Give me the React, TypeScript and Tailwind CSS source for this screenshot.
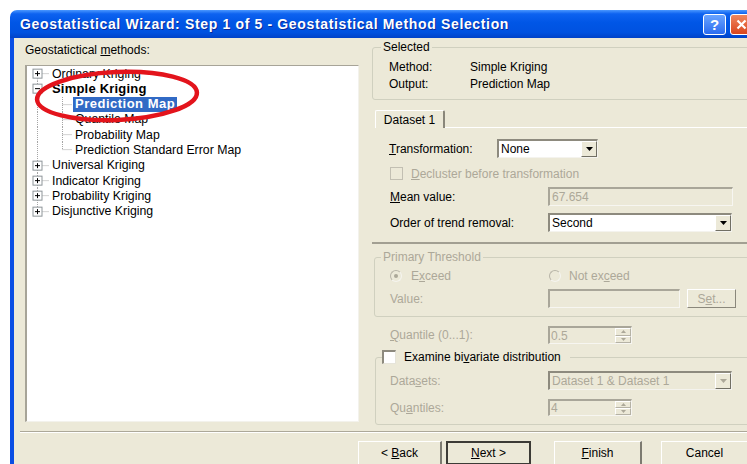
import React from "react";

type TreeRow = {
  level: 0 | 1;
  label: string;
  box?: "+" | "-";
  bold?: boolean;
  selected?: boolean;
  first?: boolean;
  last?: boolean;
  lastChild?: boolean;
};

const rows: TreeRow[] = [
  { level: 0, label: "Ordinary Kriging", box: "+", first: true },
  { level: 0, label: "Simple Kriging", box: "-", bold: true },
  { level: 1, label: "Prediction Map", selected: true },
  { level: 1, label: "Quantile Map" },
  { level: 1, label: "Probability Map" },
  { level: 1, label: "Prediction Standard Error Map", lastChild: true },
  { level: 0, label: "Universal Kriging", box: "+" },
  { level: 0, label: "Indicator Kriging", box: "+" },
  { level: 0, label: "Probability Kriging", box: "+" },
  { level: 0, label: "Disjunctive Kriging", box: "+", last: true },
];

const DOT = "#A5A5A5";

function RootCell({ row }: { row: TreeRow }) {
  const h = 15.3;
  const m = h / 2;
  const top = row.level === 0 && row.first ? m : 0;
  const bottom = row.level === 0 && row.last ? m : h;
  return (
    <svg width="22" height={h} className="shrink-0">
      <line x1="10.5" y1={top} x2="10.5" y2={bottom} stroke={DOT} strokeDasharray="1 1" />
      {row.level === 0 && (
        <line x1="10.5" y1={m} x2="22" y2={m} stroke={DOT} strokeDasharray="1 1" />
      )}
      {row.box && (
        <g>
          <rect x="6" y={m - 4.5} width="9" height="9" fill="#fff" stroke="#8E9599" />
          <line x1="8" y1={m} x2="13" y2={m} stroke="#000" />
          {row.box === "+" && <line x1="10.5" y1={m - 2.5} x2="10.5" y2={m + 2.5} stroke="#000" />}
        </g>
      )}
    </svg>
  );
}

function ChildCell({ row }: { row: TreeRow }) {
  const h = 15.3;
  const m = h / 2;
  return (
    <svg width="23" height={h} className="shrink-0">
      <line x1="13.5" y1="0" x2="13.5" y2={row.lastChild ? m : h} stroke={DOT} strokeDasharray="1 1" />
      <line x1="13.5" y1={m} x2="23" y2={m} stroke={DOT} strokeDasharray="1 1" />
    </svg>
  );
}

function Tree() {
  return (
    <div className="relative w-[334px] h-[357px] bg-white border-t border-l-2 border-r border-b border-t-[#A7A498] border-l-[#A7A498] border-r-[#F3F2EC] border-b-[#F3F2EC]">
      <div className="flex flex-col">
        {rows.map((row) => (
          <div key={row.label} className="flex items-center h-[15.3px] whitespace-nowrap">
            <RootCell row={row} />
            {row.level === 1 && <ChildCell row={row} />}
            {row.selected ? (
              <span className="ml-[1px] px-[2px] h-[15px] flex items-center bg-[#316AC5] text-white font-bold text-[13px] tracking-[0.5px]">
                {row.label}
              </span>
            ) : (
              <span
                className={
                  row.bold
                    ? "pl-[3px] font-bold text-[13px] tracking-[0.2px] leading-none"
                    : "pl-[3px] text-[12.3px] leading-none"
                }
              >
                {row.label}
              </span>
            )}
          </div>
        ))}
      </div>
      {/* red marker ring around the chosen method */}
      <svg className="absolute left-0 top-0 pointer-events-none" width="220" height="72">
        <ellipse
          cx="90"
          cy="30"
          rx="80"
          ry="24"
          fill="none"
          stroke="#E3141C"
          strokeWidth="4.5"
          transform="rotate(-2.5 90 30)"
        />
      </svg>
    </div>
  );
}

function DownArrow({ color = "#000" }: { color?: string }) {
  return (
    <svg width="7" height="4" viewBox="0 0 7 4">
      <path d="M0 0h7L3.5 4z" fill={color} />
    </svg>
  );
}

function UpArrow({ color = "#ACA899" }: { color?: string }) {
  return (
    <svg width="5" height="3" viewBox="0 0 5 3">
      <path d="M0 3h5L2.5 0z" fill={color} />
    </svg>
  );
}

function SmallDown({ color = "#ACA899" }: { color?: string }) {
  return (
    <svg width="5" height="3" viewBox="0 0 5 3">
      <path d="M0 0h5L2.5 3z" fill={color} />
    </svg>
  );
}

function Combo({
  value,
  disabled,
  width,
}: {
  value: string;
  disabled?: boolean;
  width: string;
}) {
  return (
    <div
      className={
        "flex h-[19px] border-t-2 border-l-2 border-r border-b border-t-[#8D8A7E] border-l-[#8D8A7E] border-r-[#F4F3EE] border-b-[#F4F3EE] " +
        (disabled ? "bg-[#ECE9D8] text-[#ACA899] " : "bg-white text-black ") +
        width
      }
    >
      <div className="flex-1 flex items-center pl-[2px] leading-none whitespace-nowrap">{value}</div>
      <div className="w-[16px] h-full flex items-center justify-center bg-[#ECE9D8] border border-t-white border-l-white border-r-[#716F64] border-b-[#716F64]">
        <DownArrow color={disabled ? "#ACA899" : "#000"} />
      </div>
    </div>
  );
}

function TextBox({ value, width }: { value: string; width: string }) {
  return (
    <div
      className={
        "flex items-center h-[19px] pl-[2px] bg-[#ECE9D8] text-[#ACA899] border-t-2 border-l-2 border-r border-b border-t-[#A9A699] border-l-[#A9A699] border-r-[#F7F6F1] border-b-[#F7F6F1] leading-none " +
        width
      }
    >
      {value}
    </div>
  );
}

function Spin({ value, height }: { value: string; height: string }) {
  return (
    <div
      className={
        "flex w-[84px] bg-[#ECE9D8] text-[#ACA899] border-t-2 border-l-2 border-r border-b border-t-[#A9A699] border-l-[#A9A699] border-r-[#F7F6F1] border-b-[#F7F6F1] " +
        height
      }
    >
      <div className="flex-1 flex items-center pl-[1px] leading-none">{value}</div>
      <div className="w-[16px] flex flex-col">
        <div className="flex-1 flex items-center justify-center border border-t-white border-l-white border-r-[#B5B2A5] border-b-[#B5B2A5]">
          <UpArrow />
        </div>
        <div className="flex-1 flex items-center justify-center border border-t-white border-l-white border-r-[#B5B2A5] border-b-[#B5B2A5]">
          <SmallDown />
        </div>
      </div>
    </div>
  );
}

function Radio({ checked }: { checked?: boolean }) {
  return (
    <span className="w-[12px] h-[12px] rounded-full border border-t-[#B8B5A8] border-l-[#B8B5A8] border-r-[#F5F4EF] border-b-[#F5F4EF] bg-[#ECE9D8] flex items-center justify-center">
      {checked && <span className="w-[4px] h-[4px] rounded-full bg-[#ACA899]" />}
    </span>
  );
}

function TitleBar() {
  return (
    <div className="h-[28px] shrink-0 flex items-center justify-between pl-[10px] pr-[10px] rounded-tl-[7px] bg-[linear-gradient(to_bottom,#4a97ff_0%,#0d62f0_14%,#0056e6_45%,#0052e0_80%,#0042c8_100%)]">
      <span className="text-white font-bold text-[14px] tracking-[0.65px] whitespace-nowrap [text-shadow:1px_1px_0_#0a2a9a]">
        Geostatistical Wizard: Step 1 of 5 - Geostatistical Method Selection
      </span>
      <div className="flex gap-[4px] items-center">
        <div className="w-[23px] h-[21px] rounded-[3px] border border-white bg-[linear-gradient(to_bottom,#6aa4ff,#2b6cf0)] flex items-center justify-center text-white font-bold text-[15px] leading-none">
          ?
        </div>
        <div className="w-[22px] h-[21px] rounded-[3px] border border-white bg-[linear-gradient(to_bottom,#f0875f,#d9461d)] flex items-center justify-center">
          <svg width="11" height="11" viewBox="0 0 11 11">
            <path d="M1.5 1.5l8 8M9.5 1.5l-8 8" stroke="#fff" strokeWidth="2.2" />
          </svg>
        </div>
      </div>
    </div>
  );
}

function LeftColumn() {
  return (
    <div className="w-[358px] shrink-0 pl-[11px] pt-[5px]">
      <div className="h-[14px] leading-[14px]">
        Geostatictical <u>m</u>ethods:
      </div>
      <div className="mt-[8px]">
        <Tree />
      </div>
    </div>
  );
}

function RightColumn() {
  return (
    <div className="flex-1 flex flex-col pt-[2px]">
      <fieldset className="border border-[#D0D0BF] rounded-[3px] pt-[4px] pb-[7px]">
        <legend className="ml-[8px] px-[2px] h-[14px] leading-[14px]">Selected</legend>
        <div className="flex h-[17px] items-center pl-[16px]">
          <span className="w-[81px]">Method:</span>
          <span>Simple Kriging</span>
        </div>
        <div className="flex h-[17px] items-center pl-[16px]">
          <span className="w-[81px]">Output:</span>
          <span>Prediction Map</span>
        </div>
      </fieldset>

      <div className="mt-[10px] flex items-end h-[18px]">
        <div className="ml-[3px] w-[70px] h-[18px] flex items-center justify-center rounded-t-[2px] border-t border-l border-r-2 border-t-white border-l-white border-r-[#8A877B]">
          Dataset 1
        </div>
        <div className="flex-1 border-b border-b-white" />
      </div>

      <div className="flex flex-col pl-[17px] pt-[11px] pb-[10px] border-b-2 border-b-[#A29F92]">
        <div className="flex items-center h-[19px]">
          <span className="w-[108px]">
            <u>T</u>ransformation:
          </span>
          <Combo value="None" width="w-[101px]" />
        </div>
        <div className="flex items-center h-[19px] mt-[6px] text-[#ACA899]">
          <span className="ml-[1px] w-[13px] h-[13px] border border-[#C2BFB2] bg-[#ECE9D8]" />
          <span className="ml-[8px]">
            <u>D</u>ecluster before transformation
          </span>
        </div>
        <div className="flex items-center h-[19px] mt-[4px]">
          <span className="w-[159px] pl-[1px]">
            <u>M</u>ean value:
          </span>
          <TextBox value="67.654" width="w-[185px]" />
        </div>
        <div className="flex items-center h-[19px] mt-[7px]">
          <span className="w-[159px] pl-[1px]">Order of trend removal:</span>
          <Combo value="Second" width="w-[184px]" />
        </div>
      </div>

      <fieldset className="mt-[6px] ml-[2px] border border-[#D0D0BF] rounded-[3px] pt-[3px] pb-[8px] text-[#ACA899]">
        <legend className="ml-[6px] px-[2px] h-[14px] leading-[14px]">Primary Threshold</legend>
        <div className="pl-[15px]">
          <div className="flex items-center h-[17px]">
            <div className="w-[159px] flex items-center">
              <Radio checked />
              <span className="ml-[9px]">
                E<u>x</u>ceed
              </span>
            </div>
            <div className="flex items-center">
              <Radio />
              <span className="ml-[8px]">
                Not ex<u>c</u>eed
              </span>
            </div>
          </div>
          <div className="flex items-center h-[19px] mt-[5px]">
            <span className="w-[158px]">Value:</span>
            <TextBox value="" width="w-[132px]" />
            <div className="ml-[7px] w-[49px] h-[19px] flex items-center justify-center border border-t-white border-l-white border-r-[#8A877B] border-b-[#8A877B]">
              <span>
                S<u>e</u>t...
              </span>
            </div>
          </div>
        </div>
      </fieldset>

      <div className="flex items-center h-[18px] mt-[9px] pl-[18px] text-[#ACA899]">
        <span className="w-[158px]">
          <u>Q</u>uantile (0...1):
        </span>
        <Spin value="0.5" height="h-[18px]" />
      </div>

      <fieldset className="mt-[6px] ml-[3px] border border-[#D0D0BF] rounded-[3px] pt-[7px] pb-[8px]">
        <legend className="ml-[6px] pr-[9px] h-[14px] flex items-center">
          <span className="w-[14px] h-[14px] bg-white border-t-2 border-l-2 border-r border-b border-t-[#8D8A7E] border-l-[#8D8A7E] border-r-[#E6E4DA] border-b-[#E6E4DA]" />
          <span className="ml-[8px] leading-[14px]">
            Examine bi<u>v</u>ariate distribution
          </span>
        </legend>
        <div className="pl-[14px]">
          <div className="flex items-center h-[19px] text-[#ACA899]">
            <span className="w-[158px]">
              Data<u>s</u>ets:
            </span>
            <Combo value="Dataset 1 & Dataset 1" width="w-[184px]" disabled />
          </div>
          <div className="flex items-center h-[17px] mt-[9px] text-[#ACA899]">
            <span className="w-[158px]">
              Qu<u>a</u>ntiles:
            </span>
            <Spin value="4" height="h-[17px]" />
          </div>
        </div>
      </fieldset>
    </div>
  );
}

function Btn({
  children,
  width,
  primary,
}: {
  children: React.ReactNode;
  width: string;
  primary?: boolean;
}) {
  return (
    <div
      className={
        "h-[24px] flex items-center justify-center bg-[#ECE9D8] " +
        (primary
          ? "border-2 border-[#3C3B36] "
          : "border border-t-white border-l-white border-r-2 border-r-[#7C7A70] border-b-[#7C7A70] ") +
        width
      }
    >
      <span className="whitespace-pre">{children}</span>
    </div>
  );
}

function ButtonRow() {
  return (
    <div className="flex pt-[8px] pl-[344px]">
      <Btn width="w-[84px]">
        {"< "}
        <u>B</u>ack
      </Btn>
      <div className="ml-[4px]">
        <Btn width="w-[85px]" primary>
          <u>N</u>ext{" >"}
        </Btn>
      </div>
      <div className="ml-[23px]">
        <Btn width="w-[88px]">
          <u>F</u>inish
        </Btn>
      </div>
      <div className="ml-[19px]">
        <Btn width="w-[88px]">Cancel</Btn>
      </div>
    </div>
  );
}

export default function App() {
  return (
    <div className="w-[747px] h-[464px] overflow-hidden bg-white font-['Liberation_Sans',Arial,sans-serif] text-[12px] text-black">
      <div className="ml-[10px] mt-[10px] w-[752px] h-[470px] flex flex-col">
        <TitleBar />
        <div className="flex-1 flex flex-col bg-[#ECE9D8] border-l-[4px] border-l-[#0a4ee4]">
          <div className="flex h-[393px] shrink-0">
            <LeftColumn />
            <RightColumn />
          </div>
          <div className="ml-[6px] h-[2px] border-t border-t-[#ACA899] border-b border-b-white" />
          <ButtonRow />
        </div>
      </div>
    </div>
  );
}
